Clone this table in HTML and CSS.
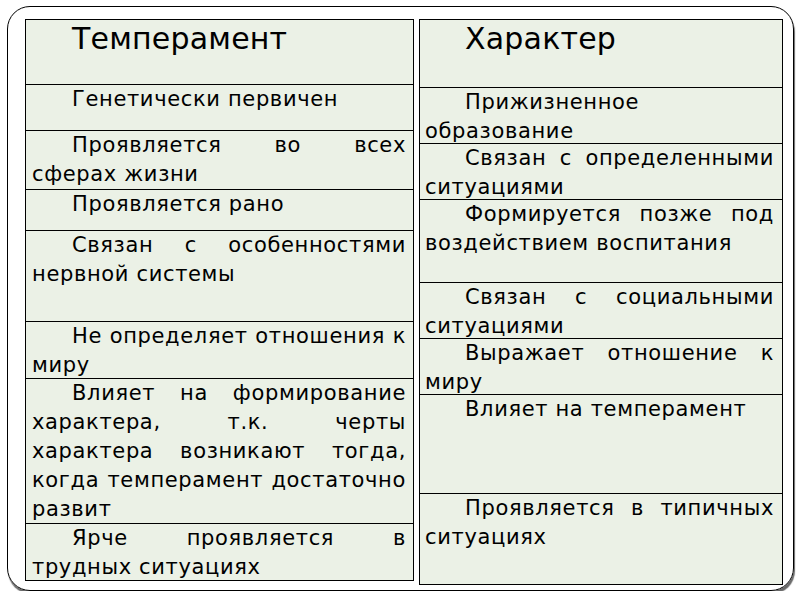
FILE: index.html
```html
<!DOCTYPE html>
<html lang="ru">
<head>
<meta charset="utf-8">
<title>Темперамент и характер</title>
<link rel="stylesheet" href="styles.css">
</head>
<body>
<div class="frame">
  <div class="table table-left">
    <div class="cell head">Темперамент</div>
    <div class="cell">Генетически первичен</div>
    <div class="cell">Проявляется во всех сферах жизни</div>
    <div class="cell">Проявляется рано</div>
    <div class="cell">Связан с особенностями нервной системы</div>
    <div class="cell">Не определяет отношения к миру</div>
    <div class="cell">Влияет на формирование характера, т.к. черты характера возникают тогда, когда темперамент достаточно развит</div>
    <div class="cell">Ярче проявляется в трудных ситуациях</div>
  </div>
  <div class="table table-right">
    <div class="cell head">Характер</div>
    <div class="cell">Прижизненное образование</div>
    <div class="cell">Связан с определенными ситуациями</div>
    <div class="cell">Формируется позже под воздействием воспитания</div>
    <div class="cell">Связан с социальными ситуациями</div>
    <div class="cell">Выражает отношение к миру</div>
    <div class="cell">Влияет на темперамент</div>
    <div class="cell">Проявляется в типичных ситуациях</div>
  </div>
</div>
</body>
</html>
```
FILE: styles.css
```css
html, body {
  margin: 0;
  padding: 0;
  background: #ffffff;
}

body {
  font-family: "DejaVu Sans", "Liberation Sans", sans-serif;
  color: #000;
}

.frame {
  box-sizing: border-box;
  width: 787px;
  height: 585px;
  margin: 6px 0 0 7px;
  padding: 12px 0 0 17px;
  border: 1px solid #000;
  border-radius: 23px;
  box-shadow: 1px 3px 1px #6a6a6a;
  display: flex;
  align-items: flex-start;
  gap: 5px;
}

.table {
  box-sizing: border-box;
  border: 1px solid #000;
  background: #ebf1e6;
  display: grid;
}

.table-left {
  width: 389px;
  height: 562px;
  grid-template-rows: 64px 46px 59px 41px 91px 57px 145px 57px;
}

.table-right {
  width: 364px;
  height: 566px;
  grid-template-rows: 67px 56px 56px 83px 56px 56px 99px 91px;
}

.cell {
  box-sizing: border-box;
  border-top: 1px solid #000;
  padding: 0 7px 0 6px;
  font-size: 21px;
  letter-spacing: 0.65px;
  line-height: 29px;
  text-align: justify;
  text-indent: 40px;
  min-height: 0;
}

.table-right .cell {
  padding: 0 8px 0 5px;
}

.cell.head {
  border-top: none;
  font-size: 30px;
  letter-spacing: 0.2px;
  line-height: 37px;
}
```
